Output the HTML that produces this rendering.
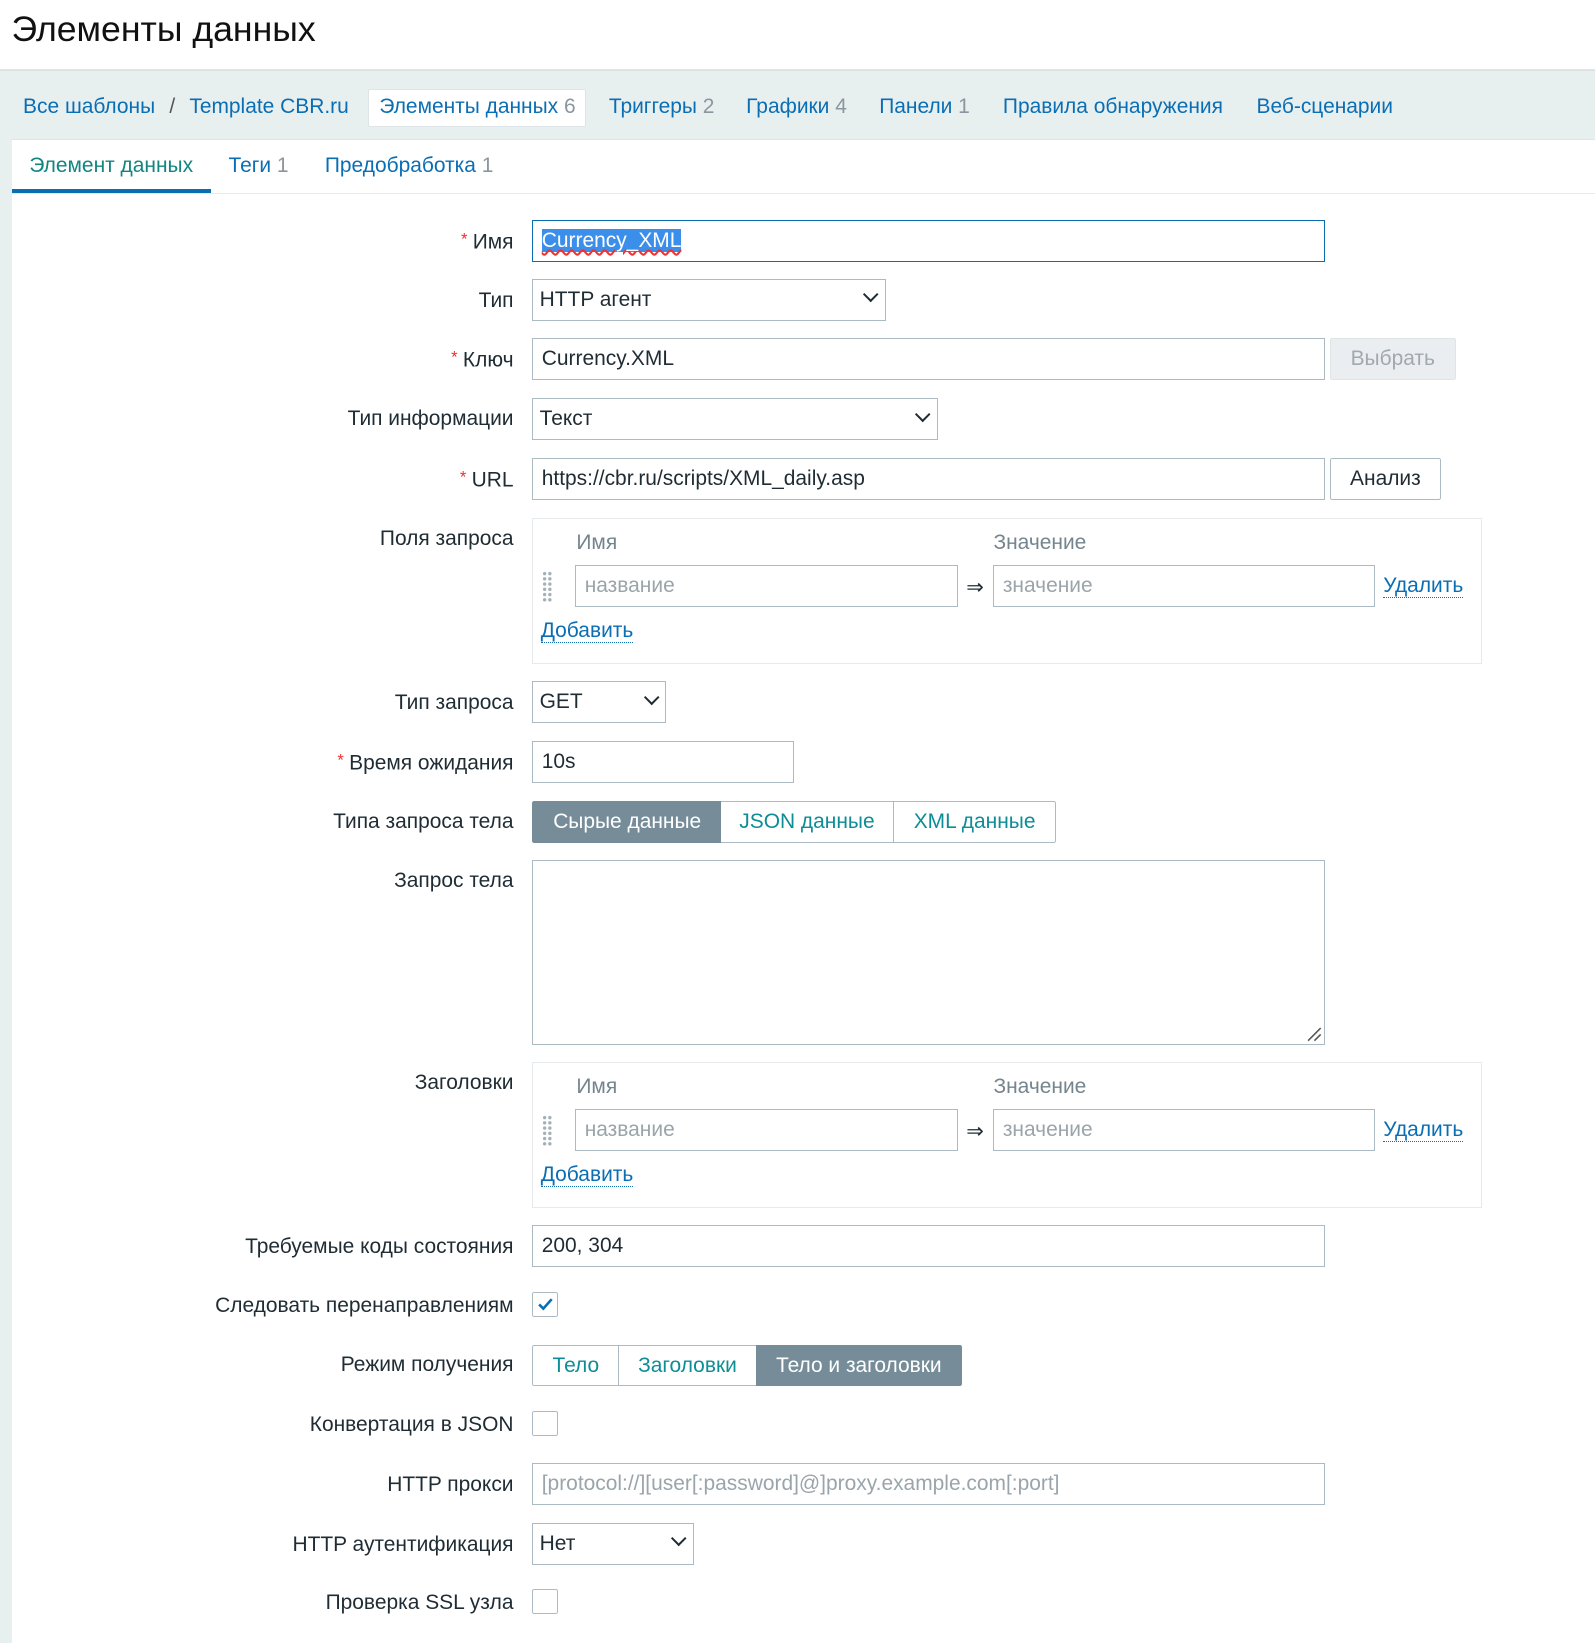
<!DOCTYPE html>
<html><head><meta charset="utf-8"><style>
html,body{margin:0;padding:0;}
body{width:1595px;height:1643px;overflow:hidden;background:#fff;}
#w{zoom:1.04796;width:1522px;height:1568px;position:relative;font-family:"Liberation Sans",Arial,sans-serif;font-size:20px;color:#1f2c33;background:#e8efef;}
.a{position:absolute;}
.hdr{left:0;top:0;width:1522px;height:67px;background:#fff;border-bottom:1px solid #dfe4e7;box-sizing:border-box;}
.nav{top:102px;transform:translateY(-50%);color:#0a6eb4;white-space:nowrap;}
.cnt{color:#8a979e;}
.panel{left:11px;top:133px;width:1511px;height:1435px;background:#fff;}
.lbl{right:1032px;transform:translateY(-50%);white-space:nowrap;text-align:right;}
.req{color:#e33;font-size:16px;vertical-align:4px;margin-right:5px;}
.inp{height:40px;box-sizing:border-box;border:1px solid #acbbc3;background:#fff;line-height:39px;padding-left:8px;white-space:nowrap;overflow:hidden;}
.ph{color:#9aa5ab;}
.chev{position:absolute;right:8px;width:9px;height:9px;border-right:2px solid #1f2c33;border-bottom:2px solid #1f2c33;transform:rotate(45deg);top:9px;}
.seg{height:40px;box-sizing:border-box;border:1px solid #acbbc3;line-height:39px;text-align:center;color:#0d8d96;background:#fff;}
.segA{background:#768d99;color:#fff;border-color:#768d99;}
.cb{width:24px;height:24px;box-sizing:border-box;border:1px solid #acbbc3;border-radius:2px;background:#fff;}
.link{color:#0a6eb4;border-bottom:1px dotted #0a6eb4;line-height:21px;}
.box{border:1px solid #e6eaec;background:#fff;box-sizing:border-box;}
.dots{width:10px;height:30px;background-image:radial-gradient(circle,#a4b0b6 1.5px,transparent 1.8px);background-size:5px 5px;}
</style></head><body><div id="w">
<div class="a hdr"></div>
<div class="a" style="left:11px;top:9px;font-size:34px;color:#111;">Элементы данных</div>
<div class="a" style="left:0;top:67px;width:1522px;height:1px;background:#dde3e5"></div>
<div class="a nav" style="left:22px">Все шаблоны <span style="color:#555;margin:0 8px">/</span> Template CBR.ru</div>
<div class="a" style="left:351px;top:85px;width:208px;height:36px;background:#fff;border:1px solid #dfe4e7;box-sizing:border-box;border-radius:2px"></div>
<div class="a nav" style="left:362px">Элементы данных <span class="cnt">6</span></div>
<div class="a nav" style="left:581px">Триггеры <span class="cnt">2</span></div>
<div class="a nav" style="left:712px">Графики <span class="cnt">4</span></div>
<div class="a nav" style="left:839px">Панели <span class="cnt">1</span></div>
<div class="a nav" style="left:957px">Правила обнаружения</div>
<div class="a nav" style="left:1199px">Веб-сценарии</div>
<div class="a panel"></div>
<div class="a" style="left:11px;top:133px;width:1511px;height:1px;background:#dfe4e7"></div>
<div class="a" style="left:11px;top:184px;width:1511px;height:1px;background:#e6eaec"></div>
<div class="a" style="left:11px;top:180px;width:190px;height:4px;background:#0a6eb4"></div>
<div class="a" style="left:28px;top:147px;color:#12857f">Элемент данных</div>
<div class="a" style="left:218px;top:147px;color:#0a6eb4">Теги <span class="cnt">1</span></div>
<div class="a" style="left:310px;top:147px;color:#0a6eb4">Предобработка <span class="cnt">1</span></div>

<div class="a lbl" style="top:231px"><span class="req">*</span>Имя</div>
<div class="a inp" style="left:508px;top:210px;width:756px;border-color:#0a6eb4"><span style="background:#3b8eea;color:#fff;text-decoration:underline wavy #e33;">Currency_XML</span></div>
<div class="a lbl" style="top:287px">Тип</div>
<div class="a inp" style="left:508px;top:266px;width:337px;padding-left:6px">HTTP агент<span class="chev"></span></div>
<div class="a lbl" style="top:344px"><span class="req">*</span>Ключ</div>
<div class="a inp" style="left:508px;top:323px;width:756px">Currency.XML</div>
<div class="a" style="left:1269px;top:323px;width:120px;height:40px;background:#ebeef0;border:1px solid #dfe4e7;box-sizing:border-box;text-align:center;line-height:39px;color:#a0a9ae;border-radius:2px">Выбрать</div>
<div class="a lbl" style="top:400px">Тип информации</div>
<div class="a inp" style="left:508px;top:380px;width:387px;padding-left:6px">Текст<span class="chev"></span></div>
<div class="a lbl" style="top:458px"><span class="req">*</span>URL</div>
<div class="a inp" style="left:508px;top:437px;width:756px">https://cbr.ru/scripts/XML_daily.asp</div>
<div class="a" style="left:1269px;top:437px;width:106px;height:40px;background:#fff;border:1px solid #acbbc3;box-sizing:border-box;text-align:center;line-height:39px;border-radius:2px">Анализ</div>

<div class="a lbl" style="top:514px">Поля запроса</div>
<div class="a box" style="left:508px;top:494px;width:906px;height:140px"></div>
<div class="a" style="left:550px;top:507px;color:#74858d">Имя</div>
<div class="a" style="left:948px;top:507px;color:#74858d">Значение</div>
<div class="a dots" style="left:517px;top:545px"></div>
<div class="a inp ph" style="left:549px;top:539px;width:365px">название</div>
<div class="a" style="left:922px;top:549px">⇒</div>
<div class="a inp ph" style="left:948px;top:539px;width:364px">значение</div>
<div class="a link" style="left:1320px;top:549px">Удалить</div>
<div class="a link" style="left:516px;top:592px">Добавить</div>

<div class="a lbl" style="top:671px">Тип запроса</div>
<div class="a inp" style="left:508px;top:650px;width:128px;padding-left:6px">GET<span class="chev"></span></div>
<div class="a lbl" style="top:728px"><span class="req">*</span>Время ожидания</div>
<div class="a inp" style="left:508px;top:707px;width:250px">10s</div>
<div class="a lbl" style="top:784px">Типа запроса тела</div>
<div class="a seg segA" style="left:508px;top:764px;width:181px;border-radius:2px 0 0 2px">Сырые данные</div>
<div class="a seg" style="left:688px;top:764px;width:165px;border-left:none">JSON данные</div>
<div class="a seg" style="left:852px;top:764px;width:156px;border-radius:0 2px 2px 0">XML данные</div>
<div class="a lbl" style="top:841px">Запрос тела</div>
<div class="a" style="left:508px;top:821px;width:756px;height:176px;border:1px solid #acbbc3;box-sizing:border-box"></div>
<svg class="a" style="left:1246px;top:979px" width="16" height="16"><path d="M2 14L14 2M8 14L14 8" stroke="#555" stroke-width="1.5"/></svg>

<div class="a lbl" style="top:1033px">Заголовки</div>
<div class="a box" style="left:508px;top:1013px;width:906px;height:140px"></div>
<div class="a" style="left:550px;top:1026px;color:#74858d">Имя</div>
<div class="a" style="left:948px;top:1026px;color:#74858d">Значение</div>
<div class="a dots" style="left:517px;top:1064px"></div>
<div class="a inp ph" style="left:549px;top:1058px;width:365px">название</div>
<div class="a" style="left:922px;top:1068px">⇒</div>
<div class="a inp ph" style="left:948px;top:1058px;width:364px">значение</div>
<div class="a link" style="left:1320px;top:1068px">Удалить</div>
<div class="a link" style="left:516px;top:1111px">Добавить</div>

<div class="a lbl" style="top:1190px">Требуемые коды состояния</div>
<div class="a inp" style="left:508px;top:1169px;width:756px">200, 304</div>
<div class="a lbl" style="top:1246px">Следовать перенаправлениям</div>
<div class="a cb" style="left:508px;top:1233px"></div>
<svg class="a" style="left:511px;top:1236px" width="18" height="18"><path d="M3 9l4 4 8-9" stroke="#0a6eb4" stroke-width="2.5" fill="none"/></svg>
<div class="a lbl" style="top:1303px">Режим получения</div>
<div class="a seg" style="left:508px;top:1283px;width:83px;border-radius:2px 0 0 2px">Тело</div>
<div class="a seg" style="left:590px;top:1283px;width:132px">Заголовки</div>
<div class="a seg segA" style="left:721px;top:1283px;width:197px;border-radius:0 2px 2px 0">Тело и заголовки</div>
<div class="a lbl" style="top:1360px">Конвертация в JSON</div>
<div class="a cb" style="left:508px;top:1346px"></div>
<div class="a lbl" style="top:1417px">HTTP прокси</div>
<div class="a inp ph" style="left:508px;top:1396px;width:756px">[protocol://][user[:password]@]proxy.example.com[:port]</div>
<div class="a lbl" style="top:1474px">HTTP аутентификация</div>
<div class="a inp" style="left:508px;top:1453px;width:154px;padding-left:6px">Нет<span class="chev"></span></div>
<div class="a lbl" style="top:1530px">Проверка SSL узла</div>
<div class="a cb" style="left:508px;top:1516px"></div>
</div></body></html>
